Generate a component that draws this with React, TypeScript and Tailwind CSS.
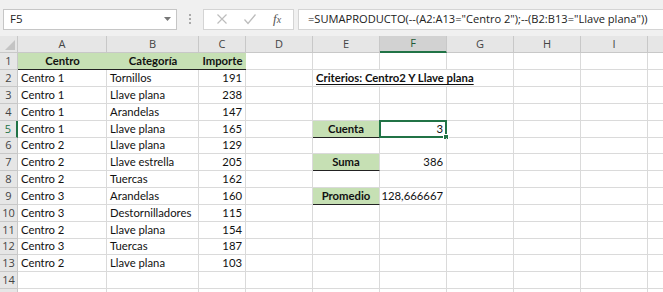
import React from "react";

const cols = [
  { key: "A", w: "w-[89px]" },
  { key: "B", w: "w-[92px]" },
  { key: "C", w: "w-[47px]" },
  { key: "D", w: "w-[67px]" },
  { key: "E", w: "w-[67px]" },
  { key: "F", w: "w-[67px]" },
  { key: "G", w: "w-[67px]" },
  { key: "H", w: "w-[67px]" },
  { key: "I", w: "w-[67px]" },
];

const data: Array<[string, string, number]> = [
  ["Centro 1", "Tornillos", 191],
  ["Centro 1", "Llave plana", 238],
  ["Centro 1", "Arandelas", 147],
  ["Centro 1", "Llave plana", 165],
  ["Centro 2", "Llave plana", 129],
  ["Centro 2", "Llave estrella", 205],
  ["Centro 2", "Tuercas", 162],
  ["Centro 3", "Arandelas", 160],
  ["Centro 3", "Destornilladores", 115],
  ["Centro 2", "Llave plana", 154],
  ["Centro 3", "Tuercas", 187],
  ["Centro 2", "Llave plana", 103],
];

const font = { fontFamily: "Lato, 'Liberation Sans', sans-serif" };
const uiFont = { fontFamily: "'Open Sans', 'Liberation Sans', sans-serif" };

// summary labels in column E, values in F
const summary: Record<number, [string, string]> = {
  5: ["Cuenta", "3"],
  7: ["Suma", "386"],
  9: ["Promedio", "128,666667"],
};

function rowHeight(r: number) {
  return r === 6 || r === 12 ? "h-[16px]" : "h-[17px]";
}

function Cell({
  w,
  className = "",
  children,
}: {
  w: string;
  className?: string;
  children?: React.ReactNode;
}) {
  return (
    <div
      className={`${w} shrink-0 h-full box-border flex items-center px-[3px] text-[11.3px] text-[#111] whitespace-nowrap ${className}`}
    >
      {children}
    </div>
  );
}

function Row({ r }: { r: number }) {
  const grid = "border-r border-b border-[#dadada]";
  const isSel = r === 5;
  const d = r >= 2 && r <= 13 ? data[r - 2] : null;
  const s = summary[r];

  return (
    <div className={`flex shrink-0 ${rowHeight(r)}`}>
      <div
        className={`w-[18px] shrink-0 h-full box-border flex items-center justify-center bg-[#e6e6e6] border-b border-[#c8c8c8] text-[11px] ${
          isSel ? "border-r-2 border-r-[#217346] text-[#217346] bg-[#d2d2d2]" : "border-r border-r-[#c8c8c8] text-[#444]"
        }`}
        style={uiFont}
      >
        {r <= 14 ? r : null}
      </div>

      {r === 1 ? (
        <>
          <Cell w={cols[0].w} className="bg-[#c6e0b4] border-b border-b-[#222] justify-center font-bold">Centro</Cell>
          <Cell w={cols[1].w} className="bg-[#c6e0b4] border-b border-b-[#222] justify-center font-bold">Categoría</Cell>
          <Cell w={cols[2].w} className="bg-[#c6e0b4] border-b border-b-[#222] justify-center font-bold">Importe</Cell>
        </>
      ) : (
        <>
          <Cell w={cols[0].w} className={grid}>{d?.[0]}</Cell>
          <Cell w={cols[1].w} className={grid}>{d?.[1]}</Cell>
          <Cell w={cols[2].w} className={`${grid} justify-end`}>{d?.[2]}</Cell>
        </>
      )}

      <Cell w={cols[3].w} className={grid} />

      {r === 2 ? (
        <>
          <Cell w={cols[4].w} className="border-b border-[#dadada] overflow-visible">
            <span className="font-bold underline underline-offset-2 relative z-10">Criterios: Centro2 Y Llave plana</span>
          </Cell>
          <Cell w={cols[5].w} className="border-b border-[#dadada]" />
          <Cell w={cols[6].w} className={grid} />
        </>
      ) : (
        <>
          {s ? (
            <Cell w={cols[4].w} className="bg-[#c6e0b4] border-b border-b-[#222] border-r border-r-[#dadada] justify-center font-bold">
              {s[0]}
            </Cell>
          ) : (
            <Cell w={cols[4].w} className={grid} />
          )}
          <div className={`${cols[5].w} shrink-0 h-full relative`}>
            <Cell w="w-full" className={`${grid} justify-end`}>{s?.[1]}</Cell>
            {isSel && (
              <div className="absolute -left-[1px] -top-[1px] w-[68px] h-[18px] border-2 border-[#217346] box-border">
                <div className="absolute -right-[4px] -bottom-[4px] w-[6px] h-[6px] bg-[#217346] border border-white" />
              </div>
            )}
          </div>
          <Cell w={cols[6].w} className={grid} />
        </>
      )}

      <Cell w={cols[7].w} className={grid} />
      <Cell w={cols[8].w} className={grid} />
      <Cell w="w-[20px]" className={grid} />
    </div>
  );
}

export default function App() {
  return (
    <div className="w-[663px] h-[292px] overflow-hidden bg-white flex flex-col" style={font}>
      {/* formula bar */}
      <div className="h-[36px] shrink-0 bg-[#f0f0f0] flex items-center pl-[3px] pt-[2px]" style={uiFont}>
        <div className="w-[174px] h-[21px] bg-white border border-[#c6c6c6] box-border flex items-center pl-[6px] pr-[5px] text-[11.5px] text-[#222]">
          <span className="flex-1">F5</span>
          <svg width="7" height="4" viewBox="0 0 7 4">
            <path d="M0 0h7L3.5 4z" fill="#777" />
          </svg>
        </div>
        <div className="w-[26px] flex flex-col items-center gap-[2px]">
          <span className="w-[2px] h-[2px] bg-[#aaa]" />
          <span className="w-[2px] h-[2px] bg-[#aaa]" />
          <span className="w-[2px] h-[2px] bg-[#aaa]" />
        </div>
        <div className="w-[91px] h-[21px] bg-white border border-[#d4d4d4] box-border flex items-center justify-around px-[4px]">
          <svg width="12" height="12" viewBox="0 0 12 12">
            <path d="M1.5 1.5l9 9M10.5 1.5l-9 9" stroke="#bdbdbd" strokeWidth="1.2" />
          </svg>
          <svg width="14" height="12" viewBox="0 0 14 12">
            <path d="M1.5 6.5l3.5 4 7.5-9" stroke="#bdbdbd" strokeWidth="1.3" fill="none" />
          </svg>
          <span className="text-[13px] italic text-[#555]" style={{ fontFamily: "'Liberation Serif', serif" }}>
            f<span className="text-[10px]">x</span>
          </span>
        </div>
        <div className="ml-[4px] flex-1 h-[21px] bg-white border border-[#d4d4d4] border-r-0 box-border flex items-center pl-[9px] text-[11.1px] text-[#222] whitespace-nowrap overflow-hidden">
          =SUMAPRODUCTO(--(A2:A13="Centro 2");--(B2:B13="Llave plana"))
        </div>
      </div>

      {/* column headers */}
      <div className="flex h-[17px] shrink-0 bg-[#e6e6e6]" style={uiFont}>
        <div className="w-[18px] shrink-0 h-full box-border border-r border-b border-[#c8c8c8] relative">
          <svg className="absolute right-[2px] bottom-[2px]" width="10" height="10" viewBox="0 0 10 10">
            <path d="M10 0v10H0z" fill="#c4c4c4" />
          </svg>
        </div>
        {cols.map((c) => (
          <div
            key={c.key}
            className={`${c.w} shrink-0 h-full box-border border-r border-[#c8c8c8] flex items-center justify-center text-[11px] ${
              c.key === "F"
                ? "bg-[#d2d2d2] border-b-2 border-b-[#217346] text-[#1e5a38]"
                : "border-b border-b-[#c8c8c8] text-[#444]"
            }`}
          >
            {c.key}
          </div>
        ))}
        <div className="w-[20px] shrink-0 h-full box-border border-b border-[#c8c8c8]" />
      </div>

      {Array.from({ length: 15 }, (_, i) => (
        <Row key={i} r={i + 1} />
      ))}
    </div>
  );
}
